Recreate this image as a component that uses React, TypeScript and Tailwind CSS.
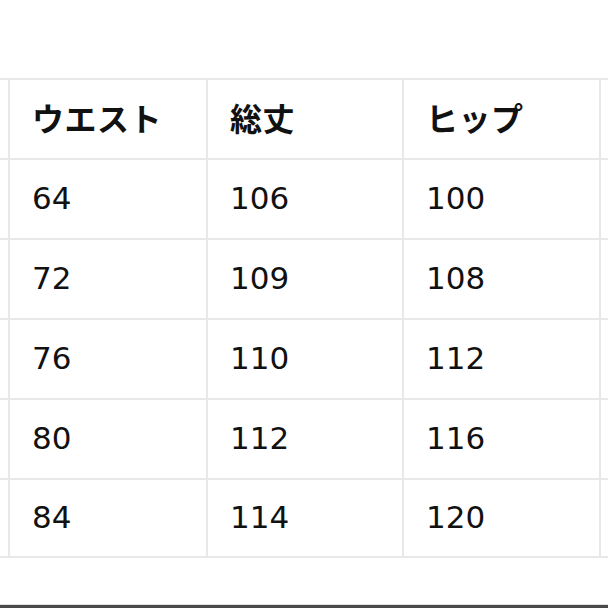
import React from "react";

// Size chart rows (the left and right columns are cut off by the crop)
const headers = ["ウエスト", "総丈", "ヒップ"];
const rows = [
  ["64", "106", "100"],
  ["72", "109", "108"],
  ["76", "110", "112"],
  ["80", "112", "116"],
  ["84", "114", "120"],
];

function Row({ cells, head, last }: { cells: string[]; head?: boolean; last?: boolean }) {
  const base =
    "h-[80px] border-t-2 border-[#e8e8e8] flex items-center " + (last ? "border-b-2 " : "");
  return (
    <div className="grid grid-cols-[8px_198px_196px_197px_1fr]">
      <div className={base} />
      {cells.map((c, i) => (
        <div
          key={i}
          className={
            base +
            "border-l-2 pl-[22px] " +
            (head
              ? "pb-[5px] font-bold text-[32px] tracking-[0.5px] font-['Noto_Sans_CJK_JP',sans-serif]"
              : "pb-[1px] text-[31px] font-['DejaVu_Sans','Noto_Sans_CJK_JP',sans-serif]")
          }
        >
          {c}
        </div>
      ))}
      <div className={base + "border-l-2"} />
    </div>
  );
}

export default function App() {
  return (
    <div className="w-[608px] h-[608px] bg-white text-[#111] overflow-hidden flex flex-col">
      <div className="pt-[78px] flex-1">
        <Row cells={headers} head />
        {rows.map((r, i) => (
          <Row key={i} cells={r} last={i === rows.length - 1} />
        ))}
      </div>
      <div className="h-[1px] bg-[#e0e0e0]" />
      <div className="h-[3px] bg-[#4a4a4a]" />
    </div>
  );
}
